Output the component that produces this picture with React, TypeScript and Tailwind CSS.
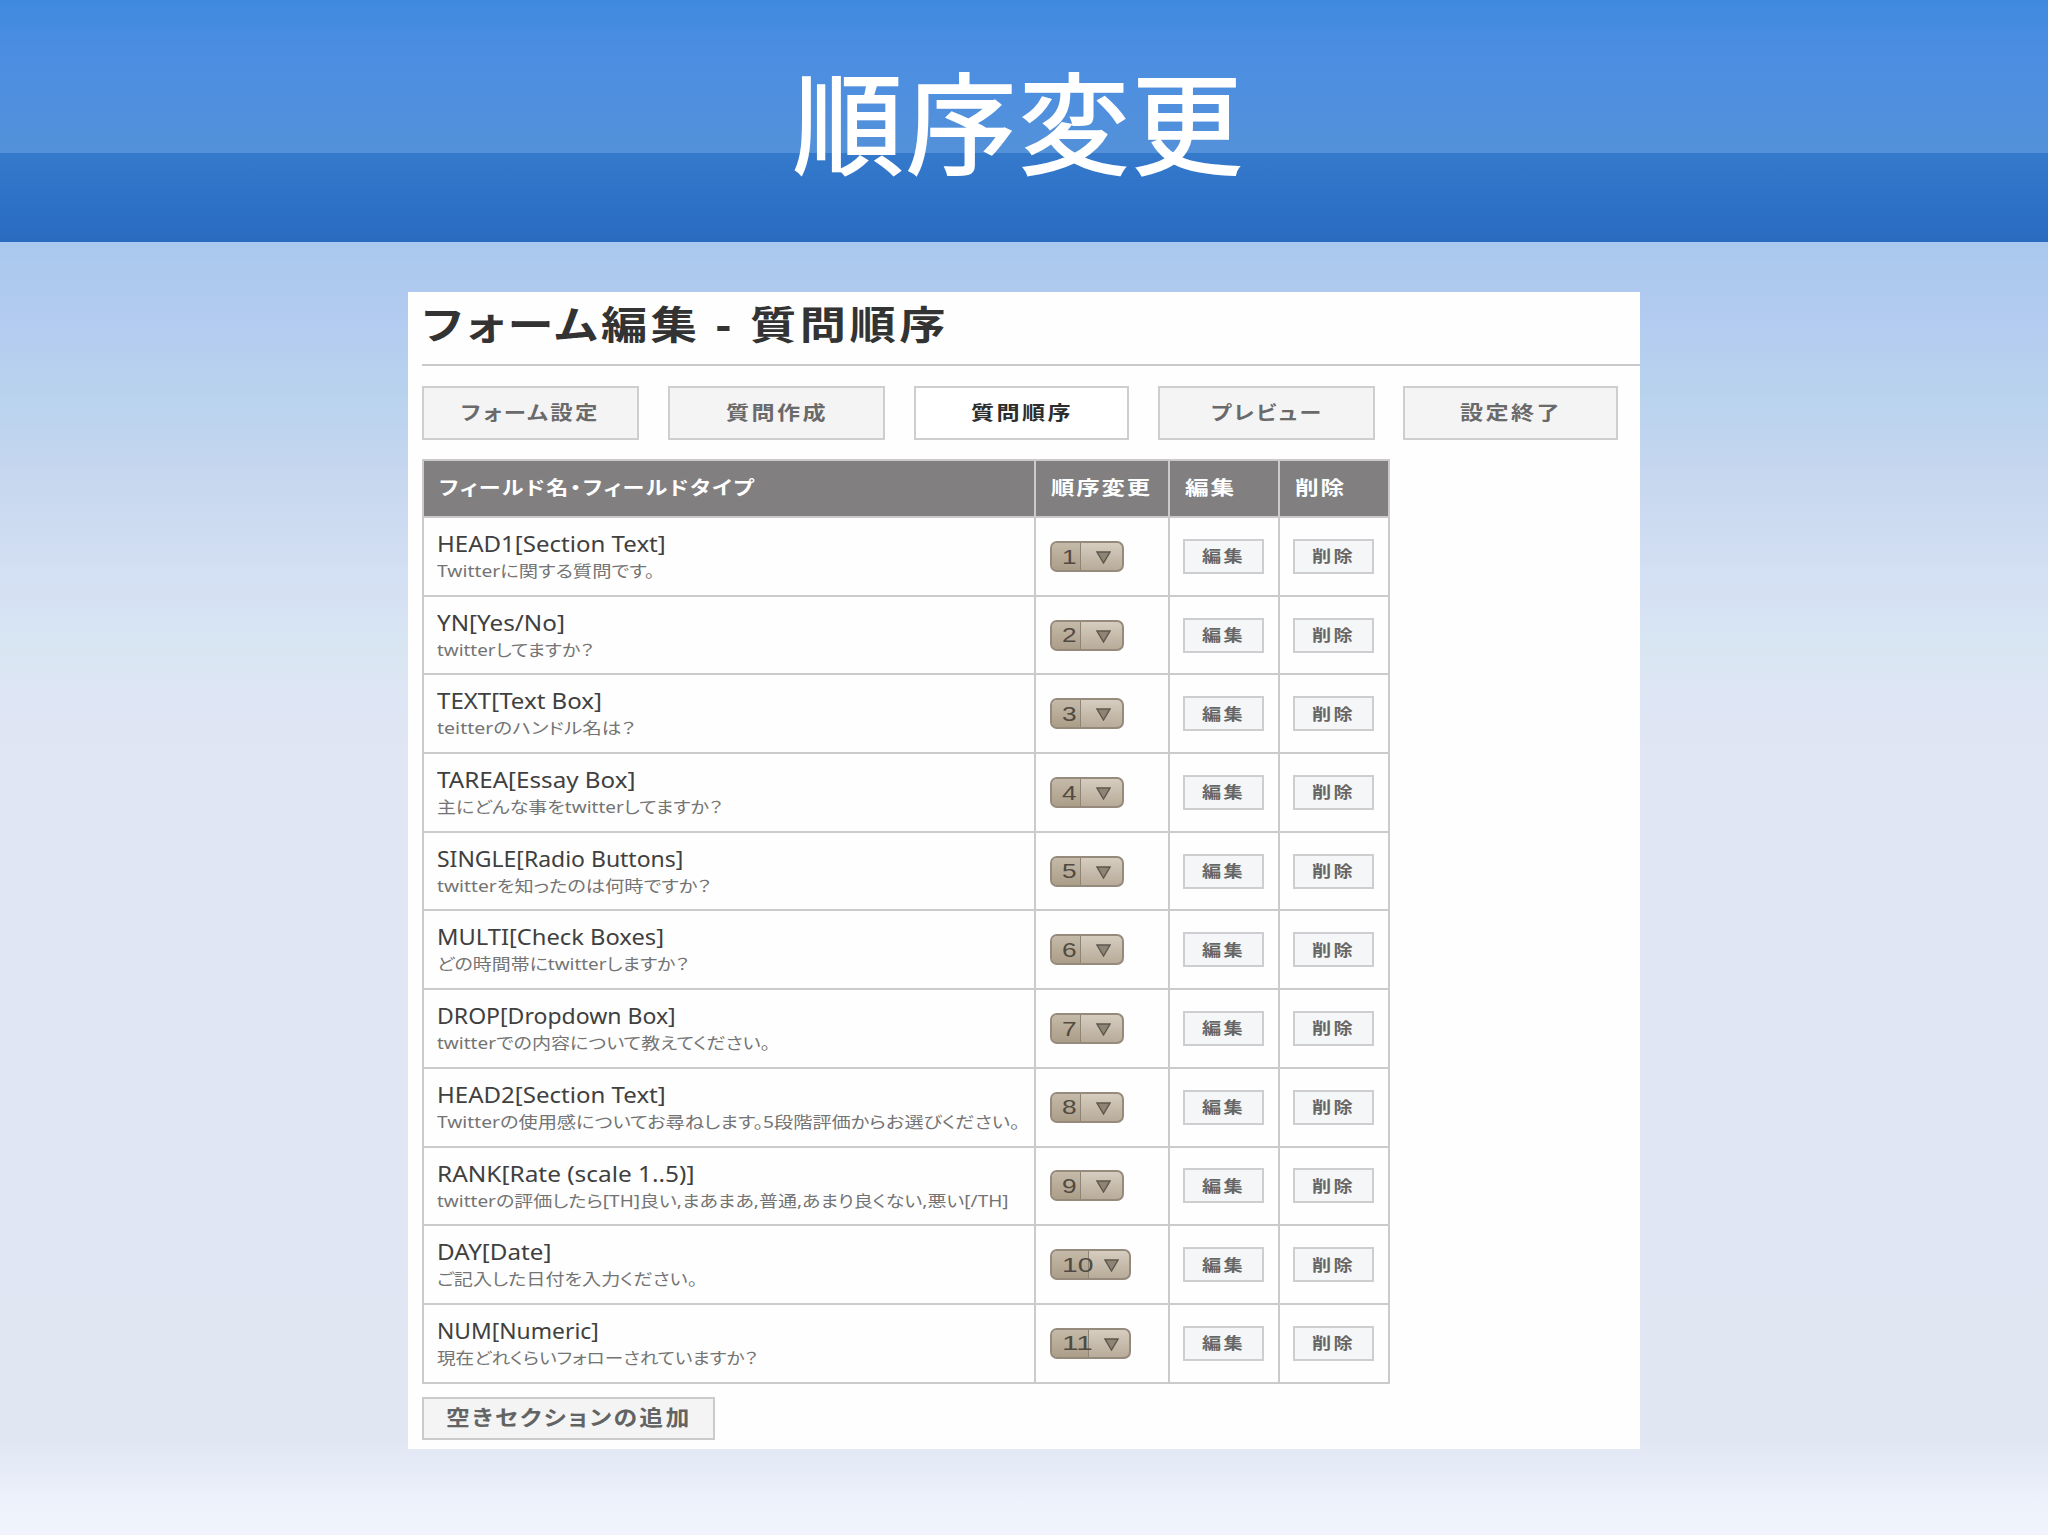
import { useLayoutEffect, useRef, useState } from "react";

interface Field {
  name: string;
  nameWidth: number;
  note: string;
  noteWidth: number;
}

const FIELDS: Field[] = [
  { name: "HEAD1[Section Text]", nameWidth: 229, note: "Twitterに関する質問です。", noteWidth: 217 },
  { name: "YN[Yes/No]", nameWidth: 128, note: "twitterしてますか？", noteWidth: 157 },
  { name: "TEXT[Text Box]", nameWidth: 165, note: "teitterのハンドル名は？", noteWidth: 198 },
  { name: "TAREA[Essay Box]", nameWidth: 198, note: "主にどんな事をtwitterしてますか？", noteWidth: 285 },
  { name: "SINGLE[Radio Buttons]", nameWidth: 246, note: "twitterを知ったのは何時ですか？", noteWidth: 274 },
  { name: "MULTI[Check Boxes]", nameWidth: 227, note: "どの時間帯にtwitterしますか？", noteWidth: 252 },
  { name: "DROP[Dropdown Box]", nameWidth: 239, note: "twitterでの内容について教えてください。", noteWidth: 333 },
  { name: "HEAD2[Section Text]", nameWidth: 229, note: "Twitterの使用感についてお尋ねします。5段階評価からお選びください。", noteWidth: 583 },
  { name: "RANK[Rate (scale 1..5)]", nameWidth: 258, note: "twitterの評価したら[TH]良い,まあまあ,普通,あまり良くない,悪い[/TH]", noteWidth: 572 },
  { name: "DAY[Date]", nameWidth: 114, note: "ご記入した日付を入力ください。", noteWidth: 260 },
  { name: "NUM[Numeric]", nameWidth: 162, note: "現在どれくらいフォローされていますか？", noteWidth: 321 },
];

const TABS = [
  { label: "フォーム設定", textWidth: 139, box: "w-[217px]" },
  { label: "質問作成", textWidth: 102, box: "ml-[29px] w-[217px]" },
  { label: "質問順序", textWidth: 102, box: "ml-[29px] w-[215px]", active: true },
  { label: "プレビュー", textWidth: 112, box: "ml-[29px] w-[217px]" },
  { label: "設定終了", textWidth: 102, box: "ml-[28px] w-[215px]" },
];

const COLUMNS = "grid grid-cols-[610px_134px_110px_110px]";

export default function App() {
  return (
    <div className="flex h-[1535px] w-[2048px] flex-col overflow-hidden bg-[linear-gradient(to_bottom,#a9c8ed_242px,#b3cbf0_320px,#b8d2ee_390px,#c5d6ee_470px,#d3dff3_570px,#d9e6f2_650px,#dee5f4_700px,#e0e6f3_760px,#e0e7f3_1440px,#ecf1fb_1500px,#f1f4fc_1535px)] font-['Noto_Sans','Noto_Sans_CJK_JP',sans-serif]">
      <header className="flex h-[242px] shrink-0 items-start justify-center bg-[linear-gradient(to_bottom,#3f8ae0_0px,#4b8de1_50px,#4e8fdf_90px,#5391d9_153px,#3579cb_153px,#2d72c8_200px,#2a6bc0_242px)]">
        <h1 className="mt-[58px] mr-[10px] text-[110px] leading-[120px] tracking-[3px] text-white [-webkit-text-stroke:2px_white] font-['Noto_Sans_CJK_JP',sans-serif]">
          順序変更
        </h1>
      </header>

      <main className="mt-[50px] ml-[408px] h-[1157px] w-[1232px] bg-[#fefefe] pl-[14px]">
        <h2 className="flex h-[74px] items-start border-b-2 border-[#cac9cb] pt-[5px] text-[39px] leading-[54px] font-bold tracking-[3px] text-[#333]">
          <FitText text="フォーム編集 - 質問順序" width={527} />
        </h2>

        <nav className="mt-[20px] flex">
          {TABS.map((tab) => (
            <button
              key={tab.label}
              type="button"
              className={`flex h-[54px] items-center justify-center border-2 border-[#cecdd0] text-[19px] font-bold tracking-[2px] ${tab.box} ${
                tab.active ? "bg-white text-[#2d2d2d]" : "bg-[#f4f4f5] text-[#6a6a6a]"
              }`}
            >
              <FitText text={tab.label} width={tab.textWidth} />
            </button>
          ))}
        </nav>

        <section className="mt-[19px] w-[968px] border-2 border-[#cccacd]">
          <div className={`${COLUMNS} h-[55px] bg-[#817f80] text-[19px] leading-[54px] font-bold tracking-[1.5px] text-white`}>
            <HeadCell text="フィールド名・フィールドタイプ" width={316} first />
            <HeadCell text="順序変更" width={101} />
            <HeadCell text="編集" width={51} />
            <HeadCell text="削除" width={51} />
          </div>
          {FIELDS.map((field, index) => (
            <FieldRow key={field.name} field={field} order={index + 1} />
          ))}
        </section>

        <button
          type="button"
          className="mt-[13px] flex h-[43px] w-[293px] items-center justify-center border-2 border-[#cbcbcb] bg-[#f4f4f4] text-[21px] font-bold tracking-[2px] text-[#636363]"
        >
          <FitText text="空きセクションの追加" width={245} />
        </button>
      </main>
    </div>
  );
}

function HeadCell({ text, width, first }: { text: string; width: number; first?: boolean }) {
  return (
    <div className={`flex ${first ? "pl-[15px]" : "border-l-2 border-[#cccacd] pl-[15px]"}`}>
      <FitText text={text} width={width} />
    </div>
  );
}

function FieldRow({ field, order }: { field: Field; order: number }) {
  return (
    <div className={`${COLUMNS} h-[78.7px] border-t-2 border-[#cccacd]`}>
      <div className="flex flex-col pt-[12px] pl-[13px]">
        <div className="flex h-[29px] text-[21px] leading-[29px] text-[#404040]">
          <FitText text={field.name} width={field.nameWidth} />
        </div>
        <div className="flex h-[24px] text-[16px] leading-[24px] text-[#747474]">
          <FitText text={field.note} width={field.noteWidth} />
        </div>
      </div>
      <div className="flex items-center border-l-2 border-[#cccacd] pl-[14px]">
        <OrderSelect value={order} />
      </div>
      <div className="flex items-center border-l-2 border-[#cccacd] pl-[13px]">
        <SmallButton label="編集" />
      </div>
      <div className="flex items-center border-l-2 border-[#cccacd] pl-[13px]">
        <SmallButton label="削除" />
      </div>
    </div>
  );
}

function OrderSelect({ value }: { value: number }) {
  const wide = value > 9;
  return (
    <button
      type="button"
      className={`flex h-[31px] overflow-hidden rounded-[7px] border-2 border-[#958a7c] bg-linear-to-b from-[#d6cdc0] to-[#b8ab99] ${
        wide ? "w-[81px]" : "w-[74px]"
      }`}
    >
      <span
        className={`flex h-full items-center border-r border-[#8f8577] bg-linear-to-b from-[#c5baa9] to-[#ab9e89] pl-[10px] text-[21px] text-[#514a42] font-['Liberation_Sans',sans-serif] ${
          wide ? "w-[37px]" : "w-[29px]"
        }`}
      >
        <FitText text={String(value)} width={wide ? 31 : 15} />
      </span>
      <svg width="15" height="13" viewBox="0 0 15 13" className="mt-[8px] ml-[15px] shrink-0" aria-hidden>
        <path d="M1 1h13L7.5 12z" fill="#8d8475" stroke="#5f574c" strokeWidth="1.4" />
      </svg>
    </button>
  );
}

function SmallButton({ label }: { label: string }) {
  return (
    <button
      type="button"
      className="flex h-[35px] w-[81px] items-center justify-center border-2 border-[#cecdd0] bg-[#f5f6f7] text-[16px] font-bold tracking-[2px] text-[#666]"
    >
      <FitText text={label} width={43} />
    </button>
  );
}

// Stretches a single line of text horizontally to the given width.
function FitText({ text, width }: { text: string; width: number }) {
  const ref = useRef<HTMLSpanElement>(null);
  const [scale, setScale] = useState(1);

  useLayoutEffect(() => {
    if (ref.current) setScale(width / ref.current.offsetWidth);
  }, [text, width]);

  return (
    <span className="flex" style={{ width }}>
      <span
        ref={ref}
        className="shrink-0 origin-left whitespace-nowrap [font-feature-settings:'palt']"
        style={{ transform: `scaleX(${scale})` }}
      >
        {text}
      </span>
    </span>
  );
}
